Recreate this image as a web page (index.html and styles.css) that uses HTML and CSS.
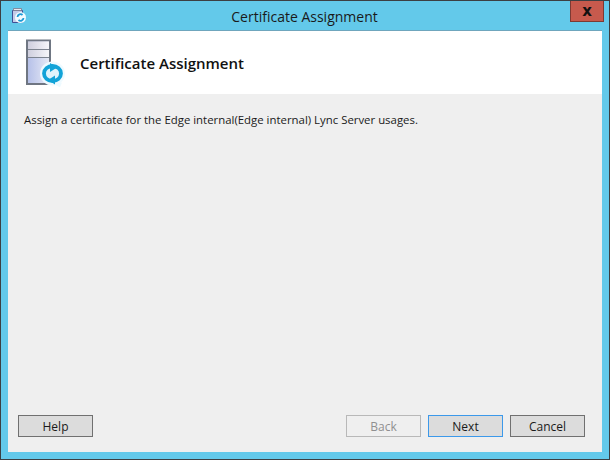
FILE: index.html
```html
<!DOCTYPE html>
<html lang="en">
<head>
<meta charset="utf-8">
<title>Certificate Assignment</title>
<link rel="stylesheet" href="styles.css">
</head>
<body>
<div class="window">
  <div class="titlebar">
    <svg class="app-icon" width="16" height="16" viewBox="0 0 16 16">
      <path d="M1.500 2.500h10v12h-10z" fill="#c3cbe8" stroke="#3f4f94"/>
      <path d="M2.500 .5h8v2h-8z" fill="#e8e8f0" stroke="#7a7a8c" stroke-width=".8"/>
      <circle cx="9.500" cy="9.500" r="5.500" fill="#f2fbff"/>
      <path d="M6.500 9a3 3 0 0 1 5-2M12.500 10a3 3 0 0 1-5 2" fill="none" stroke="#1d9ad6" stroke-width="1.800"/>
    </svg>
    <div class="title">Certificate Assignment</div>
    <div class="close"><span class="close-x">x</span></div>
  </div>
  <div class="client">
    <header class="banner">
      <svg class="banner-icon" width="48" height="48" viewBox="0 0 48 48">
        <defs>
          <linearGradient id="srv" x1="0" y1="0" x2="1" y2="0">
            <stop offset="0" stop-color="#b4bfe8"/>
            <stop offset="1" stop-color="#e8ebf6"/>
          </linearGradient>
          <linearGradient id="top" x1="0" y1="0" x2="1" y2="0">
            <stop offset="0" stop-color="#cfcfde"/>
            <stop offset="1" stop-color="#f6f6fa"/>
          </linearGradient>
        </defs>
        <rect x="3" y="1.500" width="23" height="43.500" fill="url(#srv)" stroke="#6f7682" stroke-width="2"/>
        <rect x="4" y="2.500" width="21" height="8" fill="url(#top)"/>
        <path d="M4 10.500h21" stroke="#7d8490"/>
        <rect x="4" y="11" width="21" height="7" fill="url(#top)"/>
        <path d="M4 18.500h21" stroke="#7d8490"/>
        <ellipse cx="28.500" cy="34.500" rx="12.500" ry="12" fill="#eefaff"/>
        <path d="M30 45l6 3.500 2-5z" fill="#eefaff"/>
        <ellipse cx="28.500" cy="34.500" rx="8.500" ry="7.500" fill="#dff4fc" stroke="#12a3d8" stroke-width="3.800"/>
        <path d="M26 24l7 4.500-7 4.500z" fill="#12a3d8"/>
        <path d="M31 36.500l-7 4.500 7 4.500z" fill="#12a3d8"/>
      </svg>
      <h1 class="banner-title">Certificate Assignment</h1>
    </header>
    <main class="body">
      <p class="message">Assign a certificate for the Edge internal(Edge internal) Lync Server usages.</p>
      <footer class="actions">
        <button class="btn" type="button">Help</button>
        <div class="nav">
          <button class="btn btn-disabled" type="button">Back</button>
          <button class="btn btn-default" type="button">Next</button>
          <button class="btn" type="button">Cancel</button>
        </div>
      </footer>
    </main>
  </div>
</div>
</body>
</html>
```
FILE: styles.css
```css
* { box-sizing: border-box; }
html, body { margin: 0; padding: 0; }
body { width: 610px; height: 460px; overflow: hidden; font-family: "Open Sans", "Noto Sans", sans-serif; }
.window {
  width: 610px; height: 460px;
  background: #63c9ea;
  border: 1px solid #3c3f42;
  display: flex; flex-direction: column;
  padding: 0 7px 7px 7px;
}
.titlebar { height: 29px; flex: none; display: flex; align-items: center; position: relative; }
.app-icon { position: absolute; left: 3px; top: 7px; }
.title { flex: 1; text-align: center; font-size: 14px; color: #1a1a1a; padding-top: 1px; padding-right: 1px; font-family: "Open Sans", sans-serif; }
.close {
  position: absolute; right: -2px; top: 0;
  width: 34px; height: 21px;
  background: #c75a4d;
  border: 1px solid #7d3a33; border-top: 0;
  display: flex; align-items: center; justify-content: center;
}
.close-x { font: bold 15px/1 "DejaVu Sans", sans-serif; color: #111; }
.client { flex: 1; display: flex; flex-direction: column; border-top: 1px solid #6fa6bd; min-height: 0; }
.banner { height: 63px; flex: none; background: #fff; display: flex; align-items: center; padding-left: 16px; }
.banner-icon { flex: none; }
.banner-title { margin: 0 0 0 8px; font-size: 15px; font-weight: 600; color: #111; }
.body { flex: 1; background: #efefef; display: flex; flex-direction: column; padding: 18px 17px 15px 10px; }
.message { margin: 0 0 0 6px; font-size: 11.4px; line-height: 16px; color: #1a1a1a; flex: 1; }
.actions { display: flex; justify-content: space-between; }
.nav { display: flex; gap: 7px; }
.btn {
  width: 75px; height: 22px; padding: 0;
  background: #dcdcdc; border: 1px solid #707070;
  font: 12px "Open Sans", sans-serif; color: #1a1a1a;
}
.btn-disabled { background: #efefef; border-color: #b8b8b8; color: #8f8f8f; }
.btn-default { border-color: #3c99ea; }
```
